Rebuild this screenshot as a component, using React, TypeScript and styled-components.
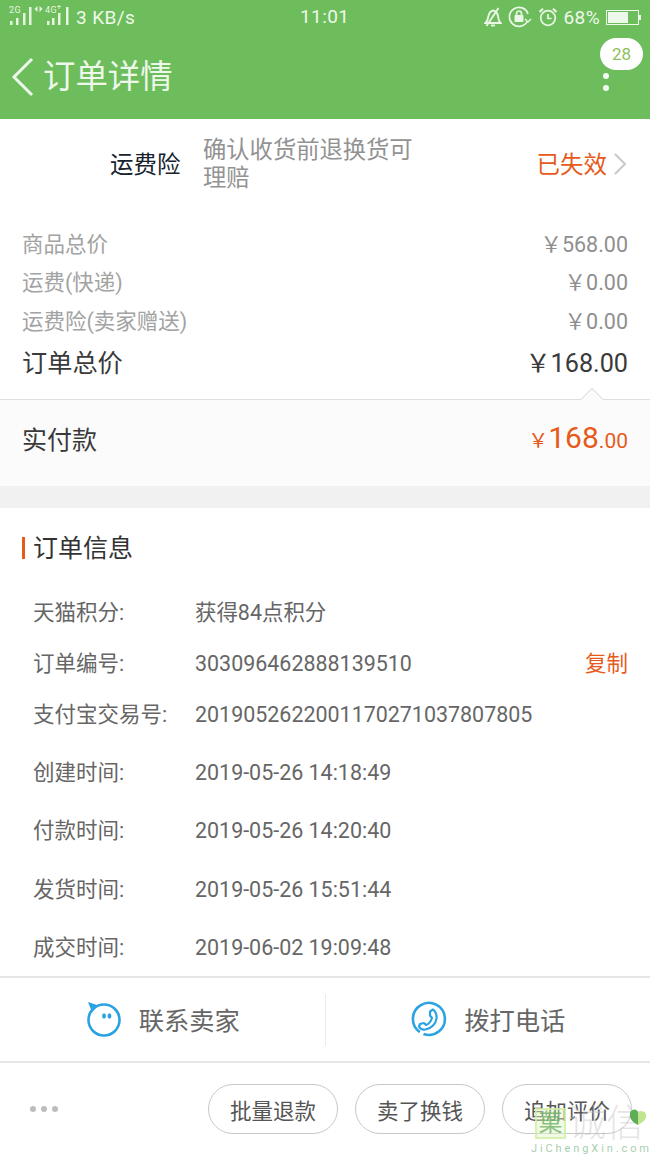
import * as React from "react";
import styled, { createGlobalStyle } from "styled-components";

const GlobalStyle = createGlobalStyle`
  html, body {
    margin: 0;
    padding: 0;
    background: #fff;
  }
  * {
    box-sizing: border-box;
  }
`;

const priceRows = [
  { label: "商品总价", value: "￥568.00" },
  { label: "运费(快递)", value: "￥0.00" },
  { label: "运费险(卖家赠送)", value: "￥0.00" },
];

const infoRows = [
  { label: "天猫积分:", value: "获得84点积分", gap: 0 },
  { label: "订单编号:", value: "303096462888139510", gap: 0, copy: true },
  { label: "支付宝交易号:", value: "2019052622001170271037807805", gap: 0 },
  { label: "创建时间:", value: "2019-05-26 14:18:49", gap: 7 },
  { label: "付款时间:", value: "2019-05-26 14:20:40", gap: 7 },
  { label: "发货时间:", value: "2019-05-26 15:51:44", gap: 8 },
  { label: "成交时间:", value: "2019-06-02 19:09:48", gap: 7 },
];

const SignalIcon = () => (
  <svg width="66" height="26" viewBox="0 0 66 26" fill="#e6f5e0">
    <text x="0" y="9" fontSize="9" fontFamily="Roboto, sans-serif">2G</text>
    <rect x="1" y="17" width="2.500" height="4" />
    <rect x="7" y="14" width="2.500" height="7" />
    <rect x="14" y="9" width="2.500" height="12" />
    <rect x="20" y="3" width="2.500" height="18" />
    <path d="M28.500 2v6l-3-3zM30.500 2v6l3-3z" />
    <text x="36" y="9" fontSize="9" fontFamily="Roboto, sans-serif">4G</text>
    <path d="M50 1v4M48 2.500h4" stroke="#e6f5e0" strokeWidth="0.900" />
    <rect x="38" y="17" width="2.500" height="4" />
    <rect x="43" y="14" width="2.500" height="7" />
    <rect x="49" y="9" width="2.500" height="12" />
    <rect x="57" y="3" width="2.500" height="18" />
  </svg>
);

const BellOffIcon = () => (
  <svg width="18" height="20" viewBox="0 0 18 20" fill="none" stroke="#eaf6e6" strokeWidth="1.900">
    <path d="M1.500 16h15c-2-2-2-4-2.500-7-.5-3-2-5-5-5.500-3 .5-4 3-4.500 5.500C4 12 3.500 14 1.500 16z" />
    <path d="M7 18.500h4" />
    <path d="M14.500 1 2.500 19" />
  </svg>
);

const RotationLockIcon = () => (
  <svg width="24" height="22" viewBox="0 0 24 22" fill="none" stroke="#eaf6e6" strokeWidth="1.700">
    <path d="M19.500 15a9.500 9.500 0 1 1 .5-7" />
    <path d="m17 13 3 3 3-3" strokeWidth="1.500" />
    <rect x="6.500" y="9" width="9" height="7" rx="1" fill="#eaf6e6" stroke="none" />
    <path d="M8.500 9V7.500a2.500 2.500 0 0 1 5 0V9" />
  </svg>
);

const AlarmIcon = () => (
  <svg width="20" height="20" viewBox="0 0 20 20" fill="none" stroke="#eaf6e6" strokeWidth="1.700">
    <circle cx="10" cy="11" r="7.300" />
    <path d="M10 7v4.500h3.500" />
    <path d="M1.500 5 5 1.800M18.500 5 15 1.800" strokeWidth="2.200" />
  </svg>
);

const BackIcon = () => (
  <svg width="24" height="40" viewBox="0 0 24 40" fill="none" stroke="#eef8ea" strokeWidth="3">
    <path d="M21 2 3 20l18 18" />
  </svg>
);

const ChevronIcon = () => (
  <svg width="14" height="24" viewBox="0 0 14 24" fill="none" stroke="#c8c8c8" strokeWidth="2">
    <path d="m2 2 10 10L2 22" />
  </svg>
);

const SellerIcon = () => (
  <svg width="36" height="36" viewBox="0 0 36 36" fill="none">
    <circle cx="18" cy="19" r="15.500" stroke="#2ba3e2" strokeWidth="2.600" />
    <path d="M2 1 12.500 4.500 6 11z" fill="#2ba3e2" />
    <ellipse cx="18" cy="15" rx="1.900" ry="2.700" fill="#2ba3e2" />
    <ellipse cx="23.500" cy="15" rx="1.900" ry="2.700" fill="#2ba3e2" />
  </svg>
);

const PhoneIcon = () => (
  <svg width="36" height="36" viewBox="0 0 36 36" fill="none" stroke="#2ba3e2" strokeWidth="2.600">
    <path d="M8.800 31.100A16 16 0 1 1 12.500 33" />
    <path
      d="M19 10.500l3-2c2 1 4 5 3.500 9-.5 5-5 10-11 11-3 .5-5.500-1-6.500-3l1-2.500 4-1 2 2c3-1 5-4 6-7l-2-2.500z"
      strokeWidth="2.200"
      strokeLinejoin="round"
    />
  </svg>
);

const HeartIcon = () => (
  <svg width="20" height="18" viewBox="0 0 20 18">
    <path d="M10 17C4 14 1 10 2 5c1-4 6-5 8-1v13z" fill="#5fae55" />
    <path d="M10 17c6-3 9-7 8-11-1-3-5-4-8-1v12z" fill="#bfe68f" />
  </svg>
);

const App: React.FC = () => {
  return (
    <Page>
      <GlobalStyle />
      <Header>
        <StatusBar>
          <StatusLeft>
            <SignalIcon />
            <span>3 KB/s</span>
          </StatusLeft>
          <StatusTime>11:01</StatusTime>
          <StatusRight>
            <BellOffIcon />
            <RotationLockIcon />
            <AlarmIcon />
            <span>68%</span>
            <Battery>
              <BatteryFill />
            </Battery>
          </StatusRight>
        </StatusBar>
        <TitleBar>
          <BackIcon />
          <Title>订单详情</Title>
          <MoreDots>
            <Dot />
            <Dot />
          </MoreDots>
          <Badge>28</Badge>
        </TitleBar>
      </Header>

      <InsuranceRow>
        <InsuranceName>运费险</InsuranceName>
        <InsuranceDesc>确认收货前退换货可理赔</InsuranceDesc>
        <InsuranceStatus>已失效</InsuranceStatus>
        <ChevronBox>
          <ChevronIcon />
        </ChevronBox>
      </InsuranceRow>

      <PriceList>
        {priceRows.map((row) => (
          <PriceRow key={row.label}>
            <span>{row.label}</span>
            <span>{row.value}</span>
          </PriceRow>
        ))}
        <TotalRow>
          <span>订单总价</span>
          <span>￥168.00</span>
        </TotalRow>
      </PriceList>

      <PaidRow>
        <Notch />
        <PaidLabel>实付款</PaidLabel>
        <PaidAmount>
          <Yen>￥</Yen>
          <Whole>168</Whole>
          <Cents>.00</Cents>
        </PaidAmount>
      </PaidRow>

      <SectionGap />

      <SectionTitle>订单信息</SectionTitle>
      <InfoList>
        {infoRows.map((row) => (
          <InfoRow key={row.label} $gap={row.gap}>
            <InfoLabel>{row.label}</InfoLabel>
            <InfoValue>{row.value}</InfoValue>
            {row.copy && <CopyLink>复制</CopyLink>}
          </InfoRow>
        ))}
      </InfoList>

      <ContactBar>
        <ContactItem>
          <SellerIcon />
          <span>联系卖家</span>
        </ContactItem>
        <ContactDivider />
        <ContactItem>
          <PhoneIcon />
          <span>拨打电话</span>
        </ContactItem>
      </ContactBar>

      <ActionBar>
        <MoreGray>
          <GrayDot />
          <GrayDot />
          <GrayDot />
        </MoreGray>
        <ActionButton>批量退款</ActionButton>
        <ActionButton>卖了换钱</ActionButton>
        <ActionButton>追加评价</ActionButton>
      </ActionBar>

      <Watermark>
        <WatermarkLogo>
          <WatermarkGlyph>菓</WatermarkGlyph>
          <WatermarkWords>诚信</WatermarkWords>
          <WatermarkHeart>
            <HeartIcon />
          </WatermarkHeart>
        </WatermarkLogo>
        <WatermarkUrl>JiChengXin.com</WatermarkUrl>
      </Watermark>
    </Page>
  );
};

export default App;

const Page = styled.div`
  position: relative;
  width: 650px;
  height: 1155px;
  overflow: hidden;
  display: flex;
  flex-direction: column;
  background: #fff;
  font-family: Roboto, "Noto Sans CJK SC", sans-serif;
`;

const Header = styled.header`
  height: 119px;
  flex: none;
  background: #6dbd5c;
  color: #eef8ea;
`;

const StatusBar = styled.div`
  height: 34px;
  padding: 0 10px 0 9px;
  display: flex;
  align-items: center;
  justify-content: space-between;
  position: relative;
  font-size: 19px;
  letter-spacing: 0.4px;
`;

const StatusLeft = styled.div`
  display: flex;
  align-items: center;
  span {
    margin-left: 1px;
  }
`;

const StatusTime = styled.div`
  position: absolute;
  left: 300px;
  top: 5px;
`;

const StatusRight = styled.div`
  display: flex;
  align-items: center;
  gap: 6px;
`;

const Battery = styled.div`
  width: 33px;
  height: 15px;
  margin-right: 1px;
  border: 1px solid #eef8ea;
  padding: 1px;
  position: relative;
  &::after {
    content: "";
    position: absolute;
    right: -3px;
    top: 4px;
    width: 2px;
    height: 5px;
    background: #eef8ea;
  }
`;

const BatteryFill = styled.div`
  width: 68%;
  height: 100%;
  background: #eef8ea;
`;

const TitleBar = styled.div`
  position: relative;
  height: 85px;
  padding: 1px 0 0 11px;
  display: flex;
  align-items: center;
  gap: 8px;
`;

const Title = styled.h1`
  margin: 0;
  font-size: 32.400px;
  font-weight: 400;
  line-height: 40px;
`;

const MoreDots = styled.div`
  position: absolute;
  left: 603px;
  top: 39px;
  display: flex;
  flex-direction: column;
  gap: 6px;
`;

const Dot = styled.div`
  width: 6px;
  height: 6px;
  border-radius: 50%;
  background: #f4fbf2;
`;

const Badge = styled.div`
  position: absolute;
  left: 600px;
  top: 4px;
  width: 43px;
  height: 32px;
  border-radius: 16px;
  background: #fff;
  color: #8fbf5c;
  font-size: 17px;
  line-height: 32px;
  text-align: center;
`;

const InsuranceRow = styled.div`
  height: 91px;
  flex: none;
  padding: 17px 23px 0 110px;
  display: flex;
  align-items: flex-start;
`;

const InsuranceName = styled.div`
  margin-top: 15px;
  width: 93px;
  flex: none;
  font-size: 23.500px;
  line-height: 29px;
  color: #16222e;
`;

const InsuranceDesc = styled.div`
  width: 216px;
  flex: none;
  font-size: 23.300px;
  line-height: 28px;
  color: #929292;
`;

const InsuranceStatus = styled.div`
  margin: 15px 6px 0 auto;
  font-size: 23.500px;
  line-height: 29px;
  color: #e65b1c;
`;

const ChevronBox = styled.div`
  margin-top: 16px;
  height: 24px;
`;

const PriceList = styled.div`
  flex: none;
  padding: 13px 22px 0;
  height: 189px;
  margin-bottom: -109px;
`;

const PriceRow = styled.div`
  height: 38.500px;
  display: flex;
  align-items: center;
  justify-content: space-between;
  font-size: 21.500px;
  color: #a3a3a3;
  span:last-child {
    color: #8f8f8f;
  }
`;

const TotalRow = styled.div`
  height: 44px;
  display: flex;
  align-items: center;
  justify-content: space-between;
  font-size: 25.200px;
  color: #3a3a3a;
`;

const PaidRow = styled.div`
  position: relative;
  margin-top: 109px;
  height: 87px;
  flex: none;
  padding: 0 22px 11px;
  display: flex;
  align-items: center;
  justify-content: space-between;
  background: #fbfbfb;
  border-top: 1px solid #dfdfdf;
`;

const Notch = styled.div`
  position: absolute;
  right: 50px;
  top: -9px;
  width: 16px;
  height: 16px;
  background: #fbfbfb;
  border-top: 1px solid #dfdfdf;
  border-left: 1px solid #dfdfdf;
  transform: rotate(45deg);
`;

const PaidLabel = styled.div`
  font-size: 25px;
  color: #3a3a3a;
`;

const PaidAmount = styled.div`
  display: flex;
  align-items: baseline;
  color: #e65b1c;
`;

const Yen = styled.span`
  font-size: 20px;
`;

const Whole = styled.span`
  font-size: 30px;
`;

const Cents = styled.span`
  font-size: 21px;
`;

const SectionGap = styled.div`
  height: 22px;
  flex: none;
  background: #f1f1f1;
`;

const SectionTitle = styled.h2`
  margin: 29px 0 0 22px;
  height: 22px;
  flex: none;
  padding-left: 8px;
  border-left: 3px solid #e65b1c;
  font-size: 25px;
  font-weight: 400;
  line-height: 24px;
  color: #333;
`;

const InfoList = styled.div`
  flex: none;
  margin-top: 28px;
  padding: 0 22px 0 33px;
`;

const InfoRow = styled.div<{ $gap: number }>`
  height: 51px;
  margin-top: ${(p) => p.$gap}px;
  display: flex;
  align-items: center;
  font-size: 21.500px;
  line-height: 30px;
`;

const InfoLabel = styled.div`
  width: 162px;
  flex: none;
  color: #666;
`;

const InfoValue = styled.div`
  font-size: 21.450px;
  color: #666;
`;

const CopyLink = styled.div`
  margin-left: auto;
  color: #e65b1c;
`;

const ContactBar = styled.div`
  height: 87px;
  flex: none;
  margin-top: auto;
  display: flex;
  align-items: center;
  border-top: 2px solid #e6e6e6;
  border-bottom: 2px solid #e6e6e6;
`;

const ContactItem = styled.div`
  flex: 1;
  display: flex;
  align-items: center;
  justify-content: center;
  gap: 17px;
  padding: 0 0 2px 1px;
  font-size: 25.300px;
  color: #666;
`;

const ContactDivider = styled.div`
  width: 1px;
  height: 52px;
  background: #ececec;
`;

const ActionBar = styled.div`
  height: 92px;
  flex: none;
  padding: 0 18px 0 30px;
  display: flex;
  align-items: center;
  gap: 17px;
`;

const MoreGray = styled.div`
  display: flex;
  gap: 5px;
  margin-right: auto;
`;

const GrayDot = styled.div`
  width: 6px;
  height: 6px;
  border-radius: 50%;
  background: #bdbdbd;
`;

const ActionButton = styled.button`
  width: 130px;
  height: 50px;
  padding: 0;
  border: 1px solid #c8c8c8;
  border-radius: 25px;
  background: #fff;
  color: #555;
  font-family: inherit;
  font-size: 21.500px;
`;

const Watermark = styled.div`
  position: absolute;
  left: 531px;
  top: 1105px;
  width: 119px;
  pointer-events: none;
`;

const WatermarkLogo = styled.div`
  position: relative;
  display: flex;
  align-items: center;
  height: 36px;
  padding-left: 4px;
`;

const WatermarkGlyph = styled.div`
  width: 31px;
  height: 31px;
  flex: none;
  border: 2px solid rgba(205, 238, 160, 0.75);
  font-size: 24px;
  line-height: 27px;
  text-align: center;
  color: rgba(105, 175, 95, 0.75);
  background: rgba(225, 245, 195, 0.45);
`;

const WatermarkWords = styled.div`
  margin-left: 2px;
  font-size: 38px;
  font-weight: 300;
  line-height: 36px;
  white-space: nowrap;
  color: rgba(195, 195, 195, 0.45);
`;

const WatermarkHeart = styled.div`
  position: absolute;
  left: 97px;
  top: 3px;
`;

const WatermarkUrl = styled.div`
  margin-top: 2px;
  font-size: 11px;
  line-height: 12px;
  letter-spacing: 2.900px;
  color: #a8cfae;
  white-space: nowrap;
`;
